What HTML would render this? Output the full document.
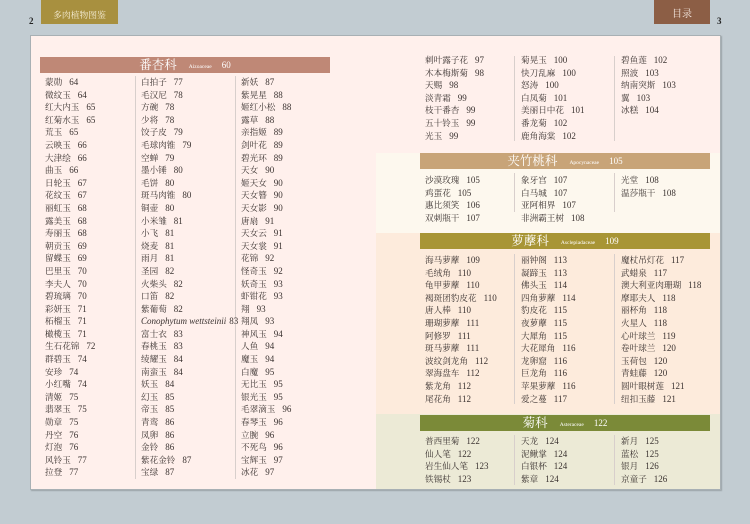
<!DOCTYPE html><html><head><meta charset="utf-8"><style>
*{margin:0;padding:0;box-sizing:border-box}
body{width:750px;height:524px;background:#c2ccd2;position:relative;overflow:hidden;font-family:"Liberation Serif","Noto Serif CJK SC",serif;color:#3a3230}
.a{position:absolute}
.col{position:absolute;font-size:8.6px;line-height:12.6px;white-space:nowrap}
.col div span{margin-left:7px;font-size:9px}
.bar{position:absolute;height:16px;color:#fff;text-align:center;font-size:12.5px;line-height:16px;font-family:"Liberation Serif","Noto Serif CJK SC",serif}
.bar small{font-size:5.5px;margin:0 10px 0 12px;vertical-align:1px}
.bar b{font-weight:normal;font-size:9px;vertical-align:1px}
.vl{position:absolute;width:1px;background:#d8cfcc}
</style></head><body>
<div class="a" style="left:41px;top:0;width:77px;height:24px;background:#a8903f;color:#f4ecd4;font-size:8.8px;text-align:center;line-height:30px">多肉植物图鉴</div>
<div class="a" style="left:29px;top:16px;font-size:9px;font-weight:bold;color:#222">2</div>
<div class="a" style="left:654px;top:0;width:56px;height:24px;background:#8c5e45;color:#f4e8e0;font-size:10px;text-align:center;line-height:30px">目录</div>
<div class="a" style="left:717px;top:16px;font-size:9px;font-weight:bold;color:#222">3</div>
<div class="a" style="left:30px;top:35px;width:691px;height:455px;background:#fff0ec;box-shadow:1px 1px 1px #9aa3a8;border:1px solid #a8b0b4"></div>
<div class="a" style="left:376px;top:153px;width:344px;height:80px;background:#fdf8ee"></div>
<div class="a" style="left:376px;top:233px;width:344px;height:181px;background:#fdebdc"></div>
<div class="a" style="left:376px;top:414px;width:344px;height:75px;background:#ecead6"></div>

<div class="bar" style="left:40px;top:57px;width:290px;background:#bf8876">番杏科<small>Aizoaceae</small><b>60</b></div>
<div class="vl" style="left:135px;top:76px;height:403px"></div>
<div class="vl" style="left:235px;top:76px;height:403px"></div>
<div class="col" style="left:45px;top:76px">
<div>蒙勋<span>64</span></div><div>微纹玉<span>64</span></div><div>红大内玉<span>65</span></div><div>红菊水玉<span>65</span></div><div>荒玉<span>65</span></div><div>云映玉<span>66</span></div><div>大津绘<span>66</span></div><div>曲玉<span>66</span></div><div>日轮玉<span>67</span></div><div>花纹玉<span>67</span></div><div>丽虹玉<span>68</span></div><div>露美玉<span>68</span></div><div>寿丽玉<span>68</span></div><div>朝贡玉<span>69</span></div><div>留蝶玉<span>69</span></div><div>巴里玉<span>70</span></div><div>李夫人<span>70</span></div><div>碧琉璃<span>70</span></div><div>彩妍玉<span>71</span></div><div>柘榴玉<span>71</span></div><div>橄榄玉<span>71</span></div><div>生石花锦<span>72</span></div><div>群碧玉<span>74</span></div><div>安珍<span>74</span></div><div>小红嘴<span>74</span></div><div>清姬<span>75</span></div><div>翡翠玉<span>75</span></div><div>勋章<span>75</span></div><div>丹空<span>76</span></div><div>灯泡<span>76</span></div><div>风铃玉<span>77</span></div><div>拉登<span>77</span></div></div>
<div class="col" style="left:141px;top:76px">
<div>白拍子<span>77</span></div><div>毛汉尼<span>78</span></div><div>方碗<span>78</span></div><div>少将<span>78</span></div><div>饺子皮<span>79</span></div><div>毛球肉锥<span>79</span></div><div>空蝉<span>79</span></div><div>墨小锤<span>80</span></div><div>毛饼<span>80</span></div><div>斑马肉锥<span>80</span></div><div>铜壶<span>80</span></div><div>小米雏<span>81</span></div><div>小飞<span>81</span></div><div>烧麦<span>81</span></div><div>雨月<span>81</span></div><div>圣园<span>82</span></div><div>火柴头<span>82</span></div><div>口笛<span>82</span></div><div>紫葡萄<span>82</span></div><div><i style="font-size:9px">Conophytum wettsteinii</i><span style="margin-left:3px">83</span></div><div>富士衣<span>83</span></div><div>春桃玉<span>83</span></div><div>绫耀玉<span>84</span></div><div>南蛮玉<span>84</span></div><div>妖玉<span>84</span></div><div>幻玉<span>85</span></div><div>帝玉<span>85</span></div><div>青鸾<span>86</span></div><div>凤卵<span>86</span></div><div>金铃<span>86</span></div><div>紫花金铃<span>87</span></div><div>宝绿<span>87</span></div></div>
<div class="col" style="left:241px;top:76px">
<div>新妖<span>87</span></div><div>紫晃星<span>88</span></div><div>姬红小松<span>88</span></div><div>露草<span>88</span></div><div>亲指姬<span>89</span></div><div>剑叶花<span>89</span></div><div>碧光环<span>89</span></div><div>天女<span>90</span></div><div>姬天女<span>90</span></div><div>天女簪<span>90</span></div><div>天女影<span>90</span></div><div>唐扇<span>91</span></div><div>天女云<span>91</span></div><div>天女裳<span>91</span></div><div>花锦<span>92</span></div><div>怪奇玉<span>92</span></div><div>妖奇玉<span>93</span></div><div>虾钳花<span>93</span></div><div>翔<span>93</span></div><div>翔凤<span>93</span></div><div>神风玉<span>94</span></div><div>人鱼<span>94</span></div><div>魔玉<span>94</span></div><div>白魔<span>95</span></div><div>无比玉<span>95</span></div><div>银光玉<span>95</span></div><div>毛翠滴玉<span>96</span></div><div>春琴玉<span>96</span></div><div>立腕<span>96</span></div><div>不死鸟<span>96</span></div><div>宝辉玉<span>97</span></div><div>冰花<span>97</span></div></div>

<div class="vl" style="left:514px;top:56px;height:85px"></div>
<div class="vl" style="left:614px;top:56px;height:85px"></div>
<div class="col" style="left:425px;top:54px">
<div>刺叶露子花<span>97</span></div><div>木本梅斯菊<span>98</span></div><div>天赐<span>98</span></div><div>淡青霜<span>99</span></div><div>枝干番杏<span>99</span></div><div>五十铃玉<span>99</span></div><div>光玉<span>99</span></div></div>
<div class="col" style="left:521px;top:54px">
<div>菊晃玉<span>100</span></div><div>快刀乱麻<span>100</span></div><div>怒涛<span>100</span></div><div>白凤菊<span>101</span></div><div>美丽日中花<span>101</span></div><div>番龙菊<span>102</span></div><div>鹿角海棠<span>102</span></div></div>
<div class="col" style="left:621px;top:54px">
<div>碧鱼莲<span>102</span></div><div>照波<span>103</span></div><div>纳南突斯<span>103</span></div><div>翼<span>103</span></div><div>冰糕<span>104</span></div></div>

<div class="bar" style="left:420px;top:153px;width:290px;background:#c8a478">夹竹桃科<small>Apocynaceae</small><b>105</b></div>
<div class="vl" style="left:514px;top:173px;height:39px"></div>
<div class="vl" style="left:614px;top:173px;height:39px"></div>
<div class="col" style="left:425px;top:174px"><div>沙漠玫瑰<span>105</span></div><div>鸡蛋花<span>105</span></div><div>惠比须笑<span>106</span></div><div>双刺瓶干<span>107</span></div></div>
<div class="col" style="left:521px;top:174px"><div>象牙宫<span>107</span></div><div>白马城<span>107</span></div><div>亚阿相界<span>107</span></div><div>非洲霸王树<span>108</span></div></div>
<div class="col" style="left:621px;top:174px"><div>光堂<span>108</span></div><div>温莎瓶干<span>108</span></div></div>

<div class="bar" style="left:420px;top:233px;width:290px;background:#a89535">萝藦科<small>Asclepiadaceae</small><b>109</b></div>
<div class="vl" style="left:514px;top:254px;height:150px"></div>
<div class="vl" style="left:614px;top:254px;height:150px"></div>
<div class="col" style="left:425px;top:254px"><div>海马萝藦<span>109</span></div><div>毛绒角<span>110</span></div><div>龟甲萝藦<span>110</span></div><div>褐斑团豹皮花<span>110</span></div><div>唐人棒<span>110</span></div><div>珊瑚萝藦<span>111</span></div><div>阿修罗<span>111</span></div><div>斑马萝藦<span>111</span></div><div>波纹剑龙角<span>112</span></div><div>翠海盘车<span>112</span></div><div>紫龙角<span>112</span></div><div>尾花角<span>112</span></div></div>
<div class="col" style="left:521px;top:254px"><div>丽钟阁<span>113</span></div><div>凝蹄玉<span>113</span></div><div>佛头玉<span>114</span></div><div>四角萝藦<span>114</span></div><div>豹皮花<span>115</span></div><div>夜萝藦<span>115</span></div><div>大犀角<span>115</span></div><div>大花犀角<span>116</span></div><div>龙卵窟<span>116</span></div><div>巨龙角<span>116</span></div><div>苹果萝藦<span>116</span></div><div>爱之蔓<span>117</span></div></div>
<div class="col" style="left:621px;top:254px"><div>魔杖吊灯花<span>117</span></div><div>武蜡泉<span>117</span></div><div>澳大利亚肉珊瑚<span>118</span></div><div>摩耶夫人<span>118</span></div><div>丽杯角<span>118</span></div><div>火星人<span>118</span></div><div>心叶球兰<span>119</span></div><div>卷叶球兰<span>120</span></div><div>玉荷包<span>120</span></div><div>青蛙藤<span>120</span></div><div>圆叶眼树莲<span>121</span></div><div>纽扣玉藤<span>121</span></div></div>

<div class="bar" style="left:420px;top:415px;width:290px;background:#7b8a38">菊科<small>Asteraceae</small><b>122</b></div>
<div class="vl" style="left:514px;top:435px;height:50px"></div>
<div class="vl" style="left:614px;top:435px;height:50px"></div>
<div class="col" style="left:425px;top:435px"><div>普西里菊<span>122</span></div><div>仙人笔<span>122</span></div><div>岩生仙人笔<span>123</span></div><div>铁锡杖<span>123</span></div></div>
<div class="col" style="left:521px;top:435px"><div>天龙<span>124</span></div><div>泥鳅掌<span>124</span></div><div>白银杯<span>124</span></div><div>紫章<span>124</span></div></div>
<div class="col" style="left:621px;top:435px"><div>新月<span>125</span></div><div>蓝松<span>125</span></div><div>银月<span>126</span></div><div>京童子<span>126</span></div></div>
</body></html>
